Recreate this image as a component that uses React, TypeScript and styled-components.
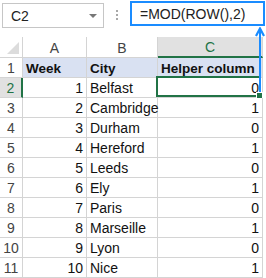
import { Fragment } from "react";
import styled, { createGlobalStyle } from "styled-components";

const Global = createGlobalStyle`
  body {
    margin: 0;
    background: #fff;
    font-family: "Liberation Sans", Arial, sans-serif;
  }
`;

const GREEN = "#217346";
const BLUE = "#1a8cff";
const GRID = "#d4d4d4";

const Page = styled.div`
  position: relative;
  width: 266px;
  height: 278px;
  overflow: hidden;
`;

const TopBar = styled.div`
  display: flex;
  align-items: flex-start;
  height: 37px;
`;

const NameBox = styled.div`
  box-sizing: border-box;
  margin: 3px 0 0 2px;
  width: 102px;
  height: 25px;
  border: 1px solid #c6c6c6;
  display: flex;
  align-items: center;
  justify-content: space-between;
  padding: 0 6px 0 8px;
  font-size: 14px;
  color: #222;
`;

const Caret = styled.span`
  width: 0;
  height: 0;
  border-left: 4px solid transparent;
  border-right: 4px solid transparent;
  border-top: 4px solid #777;
`;

const Dots = styled.div`
  width: 26px;
  height: 30px;
  display: flex;
  flex-direction: column;
  align-items: center;
  justify-content: center;
  gap: 2px;
  span {
    width: 2px;
    height: 2px;
    background: #a8a8a8;
  }
`;

const FormulaBox = styled.div`
  box-sizing: border-box;
  margin-top: 1px;
  width: 135px;
  height: 25px;
  border: 2px solid ${BLUE};
  padding-left: 8px;
  display: flex;
  align-items: center;
  font-size: 14px;
  color: #222;
`;

const Sheet = styled.div`
  display: grid;
  grid-template-columns: 23px 64px 71px 105px;
  grid-template-rows: 21px;
  grid-auto-rows: 20px;
`;

const Cell = styled.div<{ $align?: "left" | "right"; $bold?: boolean; $band?: boolean }>`
  position: relative;
  box-sizing: border-box;
  border-right: 1px solid ${GRID};
  border-bottom: 1px solid ${GRID};
  padding: 1px 3px 0 3px;
  line-height: 19px;
  font-size: ${(p) => (p.$bold ? "13.5px" : "14px")};
  font-weight: ${(p) => (p.$bold ? 700 : 400)};
  text-align: ${(p) => p.$align ?? "left"};
  background: ${(p) => (p.$band ? "#d9e1f2" : "transparent")};
  color: #111;
  white-space: nowrap;
`;

const Head = styled.div<{ $active?: boolean; $side?: "col" | "row" }>`
  box-sizing: border-box;
  display: flex;
  align-items: center;
  justify-content: center;
  font-size: 14px;
  color: ${(p) => (p.$active ? GREEN : "#444")};
  background: ${(p) => (p.$active ? "#e1e1e1" : "#fff")};
  border-right: ${(p) =>
    p.$active && p.$side === "row" ? `2px solid ${GREEN}` : `1px solid ${GRID}`};
  border-bottom: ${(p) =>
    p.$active && p.$side === "col" ? `2px solid ${GREEN}` : `1px solid ${GRID}`};
  padding-top: 1px;
`;

const Corner = styled.div`
  position: relative;
  box-sizing: border-box;
  border-right: 1px solid ${GRID};
  border-bottom: 1px solid ${GRID};
  &::after {
    content: "";
    position: absolute;
    right: 3px;
    bottom: 3px;
    width: 0;
    height: 0;
    border-left: 12px solid transparent;
    border-bottom: 12px solid #dcdcdc;
  }
`;

const Selection = styled.div`
  position: absolute;
  left: -2px;
  top: -2px;
  right: 1px;
  bottom: 0;
  border: 2px solid ${GREEN};
  pointer-events: none;
`;

const Handle = styled.div`
  position: absolute;
  right: -4px;
  bottom: -4px;
  width: 5px;
  height: 5px;
  background: ${GREEN};
  border: 1px solid #fff;
`;

const Arrow = styled.svg`
  position: absolute;
  left: 255px;
  top: 27px;
`;

const rows: [number, string, number][] = [
  [1, "Belfast", 0],
  [2, "Cambridge", 1],
  [3, "Durham", 0],
  [4, "Hereford", 1],
  [5, "Leeds", 0],
  [6, "Ely", 1],
  [7, "Paris", 0],
  [8, "Marseille", 1],
  [9, "Lyon", 0],
  [10, "Nice", 1],
];

export default function App() {
  return (
    <Page>
      <Global />
      <TopBar>
        <NameBox>
          C2
          <Caret />
        </NameBox>
        <Dots>
          <span />
          <span />
          <span />
        </Dots>
        <FormulaBox>=MOD(ROW(),2)</FormulaBox>
      </TopBar>
      <Sheet>
        <Corner />
        <Head>A</Head>
        <Head>B</Head>
        <Head $active $side="col">C</Head>

        <Head>1</Head>
        <Cell $bold $band>Week</Cell>
        <Cell $bold $band>City</Cell>
        <Cell $bold $band>Helper column</Cell>

        {rows.map(([week, city, helper], i) => (
          <Fragment key={i}>
            <Head $active={i === 0} $side="row">
              {i + 2}
            </Head>
            <Cell $align="right">{week}</Cell>
            <Cell>{city}</Cell>
            <Cell $align="right">
              {helper}
              {i === 0 && (
                <Selection>
                  <Handle />
                </Selection>
              )}
            </Cell>
          </Fragment>
        ))}
      </Sheet>
      <Arrow width="10" height="65" viewBox="0 0 10 65">
        <polyline points="1,9 5,1.5 9,9" fill="none" stroke={BLUE} strokeWidth="2.2" />
        <line x1="5" y1="2" x2="5" y2="65" stroke={BLUE} strokeWidth="2" />
      </Arrow>
    </Page>
  );
}
